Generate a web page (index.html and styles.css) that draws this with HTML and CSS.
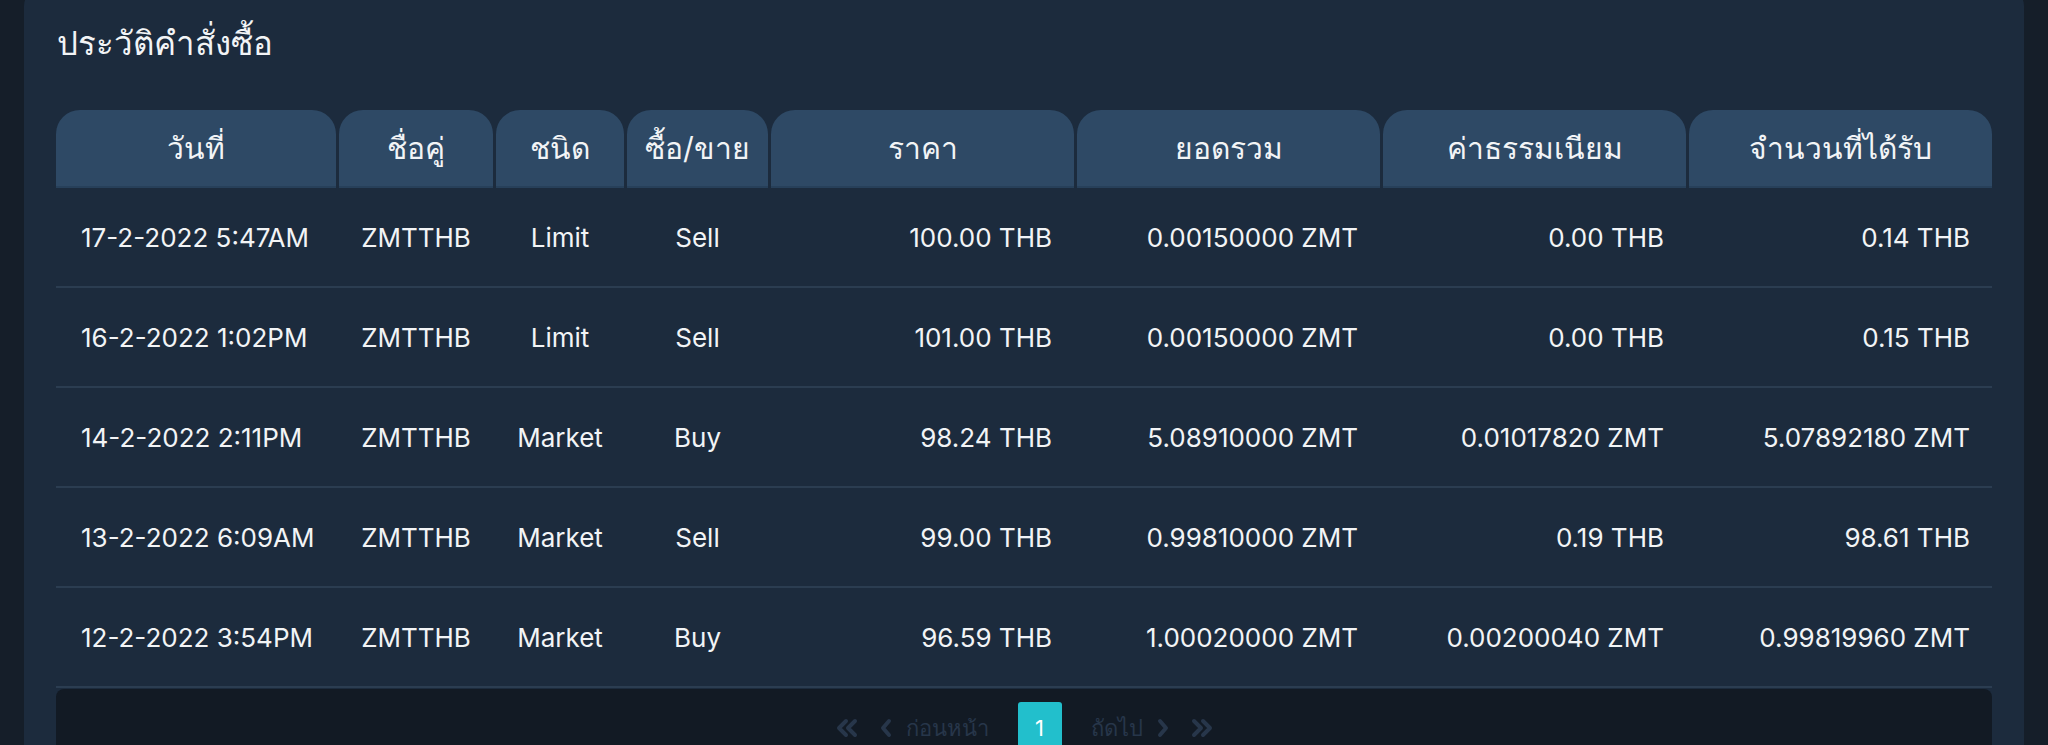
FILE: index.html
```html
<!DOCTYPE html>
<html lang="th">
<head>
  <meta charset="UTF-8" />
  <title>ประวัติคำสั่งซื้อ</title>
  <link rel="stylesheet" href="styles.css">
</head>
<body>
  <div class="page">
    <section class="card">
      <h1>ประวัติคำสั่งซื้อ</h1>

      <div class="orders">
        <div class="head">
          <div>วันที่</div>
          <div>ชื่อคู่</div>
          <div>ชนิด</div>
          <div>ซื้อ/ขาย</div>
          <div>ราคา</div>
          <div>ยอดรวม</div>
          <div>ค่าธรรมเนียม</div>
          <div>จำนวนที่ได้รับ</div>
        </div>

        <div class="row">
          <div class="date">17-2-2022 5:47AM</div>
          <div class="mid">ZMTTHB</div>
          <div class="mid">Limit</div>
          <div class="mid">Sell</div>
          <div class="num">100.00 THB</div>
          <div class="num">0.00150000 ZMT</div>
          <div class="num">0.00 THB</div>
          <div class="num">0.14 THB</div>
        </div>
        <div class="row">
          <div class="date">16-2-2022 1:02PM</div>
          <div class="mid">ZMTTHB</div>
          <div class="mid">Limit</div>
          <div class="mid">Sell</div>
          <div class="num">101.00 THB</div>
          <div class="num">0.00150000 ZMT</div>
          <div class="num">0.00 THB</div>
          <div class="num">0.15 THB</div>
        </div>
        <div class="row">
          <div class="date">14-2-2022 2:11PM</div>
          <div class="mid">ZMTTHB</div>
          <div class="mid">Market</div>
          <div class="mid">Buy</div>
          <div class="num">98.24 THB</div>
          <div class="num">5.08910000 ZMT</div>
          <div class="num">0.01017820 ZMT</div>
          <div class="num">5.07892180 ZMT</div>
        </div>
        <div class="row">
          <div class="date">13-2-2022 6:09AM</div>
          <div class="mid">ZMTTHB</div>
          <div class="mid">Market</div>
          <div class="mid">Sell</div>
          <div class="num">99.00 THB</div>
          <div class="num">0.99810000 ZMT</div>
          <div class="num">0.19 THB</div>
          <div class="num">98.61 THB</div>
        </div>
        <div class="row">
          <div class="date">12-2-2022 3:54PM</div>
          <div class="mid">ZMTTHB</div>
          <div class="mid">Market</div>
          <div class="mid">Buy</div>
          <div class="num">96.59 THB</div>
          <div class="num">1.00020000 ZMT</div>
          <div class="num">0.00200040 ZMT</div>
          <div class="num">0.99819960 ZMT</div>
        </div>
      </div>

      <div class="pager">
        <span class="arrow dbl">
          <svg viewBox="0 0 22 20" width="22" height="20"><path d="M10 3 L3 10 L10 17 M19 3 L12 10 L19 17" fill="none" stroke="currentColor" stroke-width="4" stroke-linecap="round" stroke-linejoin="round"/></svg>
        </span>
        <span class="arrow">
          <svg viewBox="0 0 12 20" width="12" height="20"><path d="M9 3 L3 10 L9 17" fill="none" stroke="currentColor" stroke-width="4" stroke-linecap="round" stroke-linejoin="round"/></svg>
        </span>
        <span class="label prev">ก่อนหน้า</span>
        <span class="page-num">1</span>
        <span class="label next">ถัดไป</span>
        <span class="arrow">
          <svg viewBox="0 0 12 20" width="12" height="20"><path d="M3 3 L9 10 L3 17" fill="none" stroke="currentColor" stroke-width="4" stroke-linecap="round" stroke-linejoin="round"/></svg>
        </span>
        <span class="arrow dbl">
          <svg viewBox="0 0 22 20" width="22" height="20"><path d="M3 3 L10 10 L3 17 M12 3 L19 10 L12 17" fill="none" stroke="currentColor" stroke-width="4" stroke-linecap="round" stroke-linejoin="round"/></svg>
        </span>
      </div>
    </section>
  </div>
</body>
</html>
```

FILE: styles.css
```css
* { box-sizing: border-box; margin: 0; padding: 0; }

body {
  background: #151e29;
  color: #f2f4f6;
  font-family: Inter, "Noto Sans", sans-serif;
  overflow: hidden;
}

.page {
  padding: 0 24px;
}

.card {
  margin-top: -12px;
  background: #1c2b3d;
  border-radius: 18px;
  padding: 33px 32px 0 32px;
  min-height: 780px;
}

h1 {
  font-size: 33px;
  font-weight: 400;
  line-height: 44px;
  padding-left: 1px;
  margin-bottom: 45px;
}

.head, .row {
  display: grid;
  grid-template-columns: 280px 154px 128px 141px 1fr 1fr 1fr 1fr;
  column-gap: 3px;
}

.head div {
  background: #2e4965;
  border-radius: 24px 24px 0 0;
  border-bottom: 2px solid #27405a;
  height: 78px;
  display: flex;
  align-items: center;
  justify-content: center;
  font-size: 30px;
}

.row {
  height: 100px;
  border-bottom: 2px solid #2b3d51;
  align-items: center;
  font-size: 26px;
}

.row .date { padding-left: 25px; }
.row .mid { text-align: center; }
.row .num { text-align: right; padding-right: 22px; }

.pager {
  margin-top: 1px;
  background: #121a24;
  border-radius: 8px 8px 0 0;
  height: 80px;
  display: flex;
  justify-content: center;
  align-items: flex-start;
  padding-top: 13px;
  color: #27364a;
}

.pager .arrow, .pager .label {
  height: 52px;
  display: flex;
  align-items: center;
}

.pager .label { font-size: 22px; }

.pager .dbl { margin: 0 22px 0 0; }
.pager .dbl:last-child { margin: 0 0 0 22px; }
.pager .prev { margin: 0 29px 0 14px; }
.pager .next { margin: 0 14px 0 29px; }

.page-num {
  width: 44px;
  height: 52px;
  background: #22bfcc;
  color: #fff;
  border-radius: 3px 3px 0 0;
  display: flex;
  align-items: center;
  justify-content: center;
  font-size: 22px;
}
```
